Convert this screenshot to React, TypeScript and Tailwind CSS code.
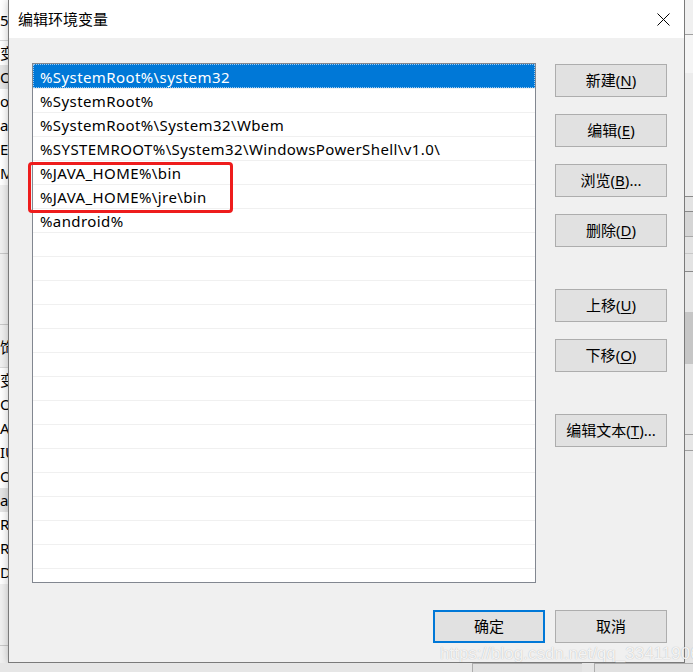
import React from "react";

const FONT = "font-['Noto_Sans','Noto_Sans_CJK_SC',sans-serif]";

const paths = [
  "%SystemRoot%\\system32",
  "%SystemRoot%",
  "%SystemRoot%\\System32\\Wbem",
  "%SYSTEMROOT%\\System32\\WindowsPowerShell\\v1.0\\",
  "%JAVA_HOME%\\bin",
  "%JAVA_HOME%\\jre\\bin",
  "%android%",
];

function Btn({ children, primary = false }: { children: React.ReactNode; primary?: boolean }) {
  return (
    <div
      className={
        "flex h-[33px] w-[112px] items-center justify-center bg-[#e1e1e1] text-[15px] text-black " +
        (primary ? "border-2 border-[#0078d7]" : "border border-[#adadad]")
      }
    >
      {children}
    </div>
  );
}

function Mn({ label, k, suffix = "" }: { label: string; k: string; suffix?: string }) {
  return (
    <span>
      {label}(<span className="underline underline-offset-2">{k}</span>){suffix}
    </span>
  );
}

export default function App() {
  const rows = Array.from({ length: 22 }, (_, i) => paths[i] ?? "");
  const leftTop = ["变", "Or", "oF", "a", "E", "M"];
  const leftBottom = ["变", "Or", "A", "IU", "OS", "a", "R", "R", "D"];
  return (
    <div className={`${FONT} relative flex h-[672px] w-[693px] flex-col overflow-hidden bg-[#f0f0f0]`}>
      <div className="flex h-[663px]">
        {/* left background window */}
        <div className="flex w-[8px] flex-col overflow-hidden bg-[#f0f0f0] text-[15px] leading-[24px] text-black">
          <div className="h-[40px] bg-white pt-[8px] whitespace-nowrap">57</div>
          <div className="h-px bg-[#d9d9d9]" />
          <div className="bg-white">
            {leftTop.map((t, i) => (
              <div key={i} className={"h-[24px] whitespace-nowrap " + (i === 1 ? "bg-[#e5e5e5]" : "")}>
                {t}
              </div>
            ))}
          </div>
          <div className="h-[68px]" />
          <div className="h-px bg-[#c8c8c8]" />
          <div className="h-[70px]" />
          <div className="h-px bg-[#c8c8c8]" />
          <div className="h-[42px] pt-[10px] whitespace-nowrap">饰</div>
          <div className="h-px bg-[#d9d9d9]" />
          <div className="bg-white">
            {leftBottom.map((t, i) => (
              <div key={i} className={"h-[24px] whitespace-nowrap " + (i === 5 ? "bg-[#e5e5e5]" : "")}>
                {t}
              </div>
            ))}
          </div>
          <div className="flex-1" />
          <div className="h-px bg-[#c8c8c8]" />
          <div className="h-[17px]" />
        </div>

        {/* dialog */}
        <div className="flex h-[663px] w-[677px] flex-col border border-t-0 border-[#7a7a7a] bg-[#f0f0f0] shadow-[0_0_8px_rgba(0,0,0,0.25)]">
          <div className="flex h-[38px] items-center justify-between bg-white pl-[9px] pr-[14px]">
            <span className="text-[15px] text-black">编辑环境变量</span>
            <svg width="13" height="13" viewBox="0 0 13 13" className="mt-[1px]">
              <path d="M0.5 0.5 L12.5 12.5 M12.5 0.5 L0.5 12.5" stroke="#000" strokeWidth="1" fill="none" />
            </svg>
          </div>
          <div className="flex flex-1 flex-col pl-[23px] pt-[25px]">
            <div className="flex">
              <div className="h-[520px] w-[504px] overflow-hidden border border-[#828790] bg-white">
                {rows.map((t, i) => (
                  <div
                    key={i}
                    className={
                      "box-border flex h-[24px] items-center whitespace-nowrap pl-[7px] pt-[2px] text-[15px] tracking-[0.4px] " +
                      (i > 0 ? "border-t border-[#f0f0f0] " : "") +
                      (i === 0 ? "bg-[#0078d7] text-white outline-1 outline-dotted -outline-offset-1 outline-[#9ccaf0]" : "text-black")
                    }
                  >
                    {t}
                  </div>
                ))}
              </div>
              <div className="ml-[19px] flex flex-col pt-[1px]">
                <Btn><Mn label="新建" k="N" /></Btn>
                <div className="h-[17px]" />
                <Btn><Mn label="编辑" k="E" /></Btn>
                <div className="h-[17px]" />
                <Btn><Mn label="浏览" k="B" suffix="..." /></Btn>
                <div className="h-[17px]" />
                <Btn><Mn label="删除" k="D" /></Btn>
                <div className="h-[42px]" />
                <Btn><Mn label="上移" k="U" /></Btn>
                <div className="h-[17px]" />
                <Btn><Mn label="下移" k="O" /></Btn>
                <div className="h-[42px]" />
                <Btn><Mn label="编辑文本" k="T" suffix="..." /></Btn>
              </div>
            </div>
            <div className="mt-[27px] flex gap-[10px] pl-[401px]">
              <Btn primary>确定</Btn>
              <Btn>取消</Btn>
            </div>
          </div>
        </div>

        {/* right background window */}
        <div className="flex w-[8px] flex-col bg-[#e9e9e9]">
          <div className="h-[34px] bg-[#f0f0f0]" />
          <div className="h-px bg-[#a0a0a0]" />
          <div className="h-[38px] bg-[#f5f5f5]" />
          <div className="h-[123px] bg-[#ececec]" />
          <div className="h-px bg-[#8a8a8a]" />
          <div className="h-[14px] bg-[#e3e3e3]" />
          <div className="h-px bg-[#8a8a8a]" />
          <div className="h-[24px] bg-[#d5d5d5]" />
          <div className="h-px bg-[#a8a8a8]" />
          <div className="h-[16px] bg-[#e3e3e3]" />
          <div className="h-px bg-[#c8c8c8]" />
          <div className="h-[17px] bg-[#e3e3e3]" />
          <div className="h-px bg-[#8a8a8a]" />
          <div className="h-[40px] bg-[#e6e6e6]" />
          <div className="h-[52px] bg-[#c6c6c6]" />
          <div className="h-[70px] bg-[#e6e6e6]" />
          <div className="h-px bg-[#a0a0a0]" />
          <div className="h-[15px] bg-[#e6e6e6]" />
          <div className="h-px bg-[#a0a0a0]" />
          <div className="flex-1 bg-[#e6e6e6]" />
        </div>
      </div>

      {/* strip below the dialog */}
      <div className="flex h-[9px] bg-[#e6e6e6]">
        <div className="w-[472px]" />
        <div className="h-full w-[110px] border-l border-t border-[#adadad] bg-[#e1e1e1]" />
        <div className="w-[12px]" />
        <div className="h-full w-[99px] border-l border-t border-[#adadad] bg-[#e1e1e1]" />
      </div>

      {/* annotation */}
      <div className="pointer-events-none absolute left-[28px] top-[162px] h-[51px] w-[205px] rounded-[4px] border-[3px] border-[#ee1c1c]" />

      {/* watermark */}
      <div className="pointer-events-none absolute left-[440px] top-[641px] whitespace-nowrap font-['Liberation_Sans',sans-serif] text-[17px] text-white/85 [text-shadow:0_0_1px_rgba(0,0,0,0.3)]">
        https://blog.csdn.net/qq_33411906
      </div>
    </div>
  );
}
